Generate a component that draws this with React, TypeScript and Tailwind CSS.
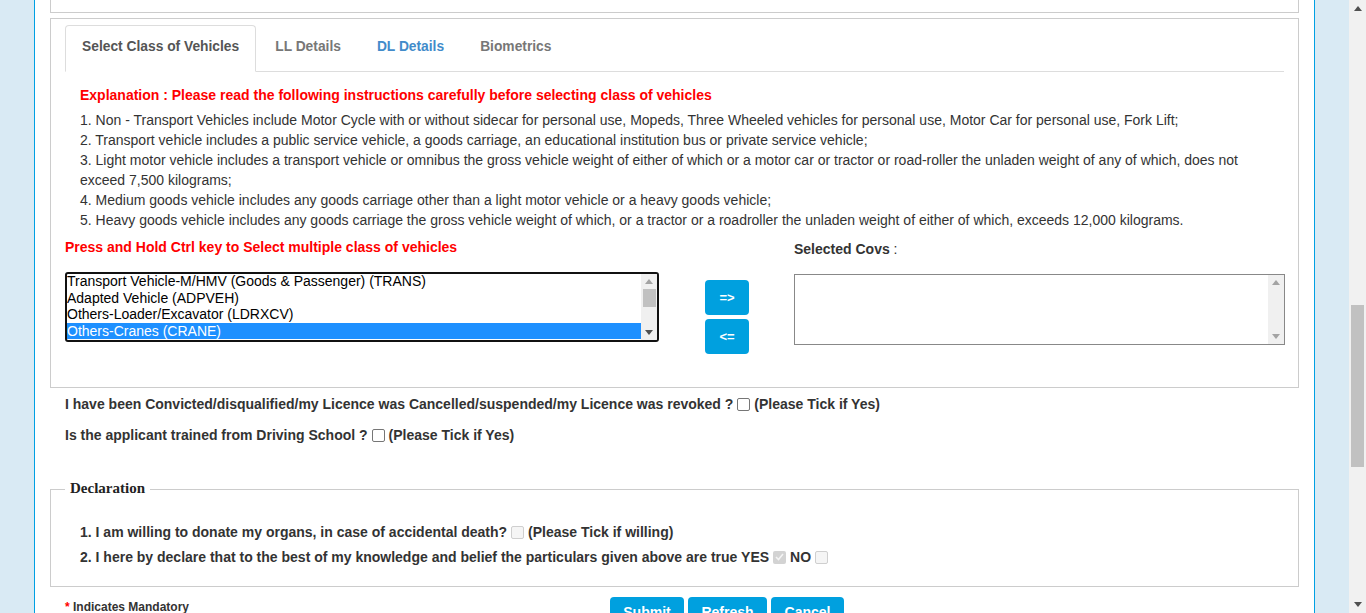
import React from 'react';

const coverText = [
  '1. Non - Transport Vehicles include Motor Cycle with or without sidecar for personal use, Mopeds, Three Wheeled vehicles for personal use, Motor Car for personal use, Fork Lift;',
  '2. Transport vehicle includes a public service vehicle, a goods carriage, an educational institution bus or private service vehicle;',
  '3. Light motor vehicle includes a transport vehicle or omnibus the gross vehicle weight of either of which or a motor car or tractor or road-roller the unladen weight of any of which, does not exceed 7,500 kilograms;',
  '4. Medium goods vehicle includes any goods carriage other than a light motor vehicle or a heavy goods vehicle;',
  '5. Heavy goods vehicle includes any goods carriage the gross vehicle weight of which, or a tractor or a roadroller the unladen weight of either of which, exceeds 12,000 kilograms.',
];

const covOptions = [
  'Transport Vehicle-M/HMV (Goods & Passenger) (TRANS)',
  'Adapted Vehicle (ADPVEH)',
  'Others-Loader/Excavator (LDRXCV)',
  'Others-Cranes (CRANE)',
];

function Arrow({ up, color }: { up?: boolean; color: string }) {
  return (
    <svg width="8" height="5" viewBox="0 0 8 5">
      <path d={up ? 'M0 5 L4 0 L8 5 Z' : 'M0 0 L8 0 L4 5 Z'} fill={color} />
    </svg>
  );
}

function Checkbox({ disabled, checked }: { disabled?: boolean; checked?: boolean }) {
  if (disabled) {
    return (
      <span
        className={
          checked
            ? 'inline-flex h-[13px] w-[13px] shrink-0 items-center justify-center rounded-[2px] bg-[#d3d3d3]'
            : 'inline-block h-[13px] w-[13px] shrink-0 rounded-[2px] border border-[#cfcfcf] bg-[#f5f5f5]'
        }
      >
        {checked && (
          <svg width="9" height="8" viewBox="0 0 9 8">
            <path d="M1 4 L3.5 6.5 L8 1" stroke="#f4f4f4" strokeWidth="1.6" fill="none" />
          </svg>
        )}
      </span>
    );
  }
  return <span className="inline-block h-[13px] w-[13px] shrink-0 rounded-[2px] border border-[#767676] bg-white" />;
}

export default function App() {
  return (
    <div className="flex h-[613px] w-[1366px] overflow-hidden bg-white font-['Liberation_Sans',Arial,sans-serif]">
      {/* left gutter */}
      <div className="w-[34px] shrink-0 bg-[#d9eaf4]" />

      {/* page body */}
      <div className="w-[1281px] shrink-0 border-x border-[#00a0e3] bg-white px-[15px]">
        <div className="h-[13px] border-x border-b border-[#cccccc]" />

        <div className="mt-[5px] h-[370px] border border-[#cccccc] px-[14px] pt-[6px]">
          {/* Tabs */}
          <div className="flex h-[47px] border-b border-[#dddddd] text-[13.8px] font-bold">
            <div className="-mb-px mr-[2px] flex h-[47px] items-center rounded-t-[4px] border border-[#dddddd] border-b-white bg-white px-4 pb-[3px] text-[#555555]">
              Select Class of Vehicles
            </div>
            <div className="-mb-px mr-[2px] flex h-[47px] items-center border border-transparent px-4 pb-[3px] text-[#777777]">
              LL Details
            </div>
            <div className="-mb-px mr-[2px] flex h-[47px] items-center border border-transparent px-4 pb-[3px] text-[#428bca]">
              DL Details
            </div>
            <div className="-mb-px mr-[2px] flex h-[47px] items-center border border-transparent px-4 pb-[3px] text-[#777777]">
              Biometrics
            </div>
          </div>

          <div className="pt-[13px]">
            <div className="px-[15px]">
              <p className="text-[14px] font-bold leading-[20px] text-[#ff0000]">
                Explanation : Please read the following instructions carefully before selecting class of vehicles
              </p>
              <div className="mt-[5px] text-[14px] leading-[20px] text-[#333333]">
                {coverText.map((t) => (
                  <p key={t}>{t}</p>
                ))}
              </div>
            </div>

            <div className="mt-[7px] flex">
              {/* available covs */}
              <div className="w-[594px] shrink-0">
                <p className="text-[14px] font-bold leading-[20px] text-[#ff0000]">
                  Press and Hold Ctrl key to Select multiple class of vehicles
                </p>
                <div className="mt-[15px] flex h-[70px] overflow-hidden rounded-[3px] border-2 border-[#111111]">
                  <div className="-mt-[1px] flex-1 text-[14px] text-black">
                    {covOptions.map((o, i) => (
                      <div
                        key={o}
                        className={
                          i === 3
                            ? 'h-[16.5px] bg-[#1e90ff] leading-[16.5px] text-white'
                            : 'h-[16.5px] leading-[16.5px]'
                        }
                      >
                        {o}
                      </div>
                    ))}
                  </div>
                  <div className="flex w-[16px] flex-col items-center bg-[#f0f0f0]">
                    <div className="flex h-[15px] items-center">
                      <Arrow up color="#a3a3a3" />
                    </div>
                    <div className="h-[18px] w-[13px] bg-[#c1c1c1]" />
                    <div className="flex-1" />
                    <div className="flex h-[15px] items-center">
                      <Arrow color="#505050" />
                    </div>
                  </div>
                </div>
              </div>

              {/* move buttons */}
              <div className="ml-[46px] mt-[43px] flex w-[44px] shrink-0 flex-col gap-[4px]">
                <button className="flex h-[35px] items-center justify-center rounded-[4px] bg-[#00a0df] text-[13px] font-bold text-white">
                  =&gt;
                </button>
                <button className="flex h-[35px] items-center justify-center rounded-[4px] bg-[#00a0df] text-[13px] font-bold text-white">
                  &lt;=
                </button>
              </div>

              {/* selected covs */}
              <div className="ml-[45px] w-[491px] shrink-0">
                <p className="mt-[2px] text-[14px] font-bold leading-[20px] text-[#333333]">
                  Selected Covs <span className="font-normal">:</span>
                </p>
                <div className="mt-[15px] flex h-[71px] border border-[#888888]">
                  <div className="flex-1" />
                  <div className="flex w-[16px] flex-col items-center justify-between bg-[#f0f0f0] py-[5px]">
                    <Arrow up color="#a3a3a3" />
                    <Arrow color="#a3a3a3" />
                  </div>
                </div>
              </div>
            </div>
          </div>
        </div>

        {/* questions */}
        <div className="px-[15px] text-[14px] font-bold leading-[20px] text-[#333333]">
          <p className="mt-[6px] flex items-center gap-[4px]">
            I have been Convicted/disqualified/my Licence was Cancelled/suspended/my Licence was revoked ?
            <Checkbox />
            (Please Tick if Yes)
          </p>
          <p className="mt-[11px] flex items-center gap-[4px]">
            Is the applicant trained from Driving School ?
            <Checkbox />
            (Please Tick if Yes)
          </p>
        </div>

        {/* declaration */}
        <fieldset className="mt-[35px] border border-[#cccccc] pb-[19px] pt-[24px]">
          <legend className="ml-[14px] px-[5px] font-['Liberation_Serif','Times_New_Roman',serif] text-[15px] font-bold leading-[18px] text-[#222222]">
            <span className="relative -top-[1px]">Declaration</span>
          </legend>
          <div className="pl-[29px] text-[14px] font-bold leading-[20px] text-[#333333]">
            <p className="flex items-center gap-[4px]">
              1. I am willing to donate my organs, in case of accidental death?
              <Checkbox disabled />
              (Please Tick if willing)
            </p>
            <p className="mt-[5px] flex items-center gap-[4px]">
              2. I here by declare that to the best of my knowledge and belief the particulars given above are true YES
              <Checkbox disabled checked />
              NO
              <Checkbox disabled />
            </p>
          </div>
        </fieldset>

        {/* footer actions */}
        <div className="mt-[10px] flex items-start">
          <p className="ml-[15px] mt-[3px] w-[545px] shrink-0 text-[12px] font-bold leading-[14px] text-[#333333]">
            <span className="text-[#ff0000]">*</span> Indicates Mandatory
          </p>
          <div className="flex gap-[4px]">
            <button className="h-[34px] w-[74px] rounded-[4px] bg-[#00a0df] pb-[4px] text-[14px] font-bold text-white">
              Submit
            </button>
            <button className="h-[34px] w-[79px] rounded-[4px] bg-[#00a0df] pb-[4px] text-[14px] font-bold text-white">
              Refresh
            </button>
            <button className="h-[34px] w-[73px] rounded-[4px] bg-[#00a0df] pb-[4px] text-[14px] font-bold text-white">
              Cancel
            </button>
          </div>
        </div>
      </div>

      {/* right gutter */}
      <div className="w-[34px] shrink-0 bg-[#d9eaf4]" />

      {/* page scrollbar */}
      <div className="flex w-[17px] shrink-0 flex-col items-center bg-[#f1f1f1]">
        <div className="flex h-[17px] items-center">
          <Arrow up color="#505050" />
        </div>
        <div className="h-[288px]" />
        <div className="h-[162px] w-[13px] bg-[#c1c1c1]" />
        <div className="flex-1" />
        <div className="flex h-[17px] items-center">
          <Arrow color="#505050" />
        </div>
      </div>
    </div>
  );
}
